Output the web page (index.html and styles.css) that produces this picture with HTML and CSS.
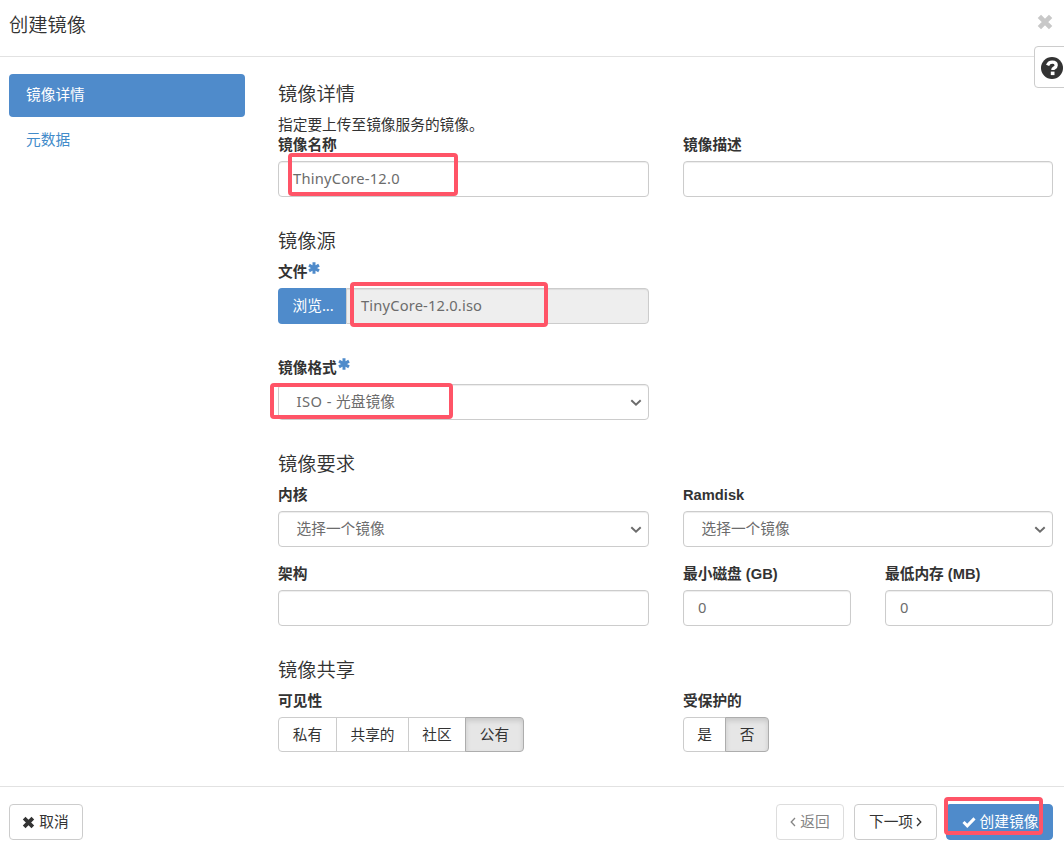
FILE: index.html
```html
<!DOCTYPE html>
<html lang="zh-CN">
<head>
<meta charset="utf-8">
<title>创建镜像</title>
<link rel="stylesheet" href="styles.css">
</head>
<body>
<div class="modal">
  <header class="modal-header">
    <h1 class="modal-title">创建镜像</h1>
    <svg class="close" viewBox="0 0 16 16"><path d="M3 3 13 13M13 3 3 13"/></svg>
  </header>
  <div class="help">
    <svg viewBox="0 0 22 22"><circle cx="11" cy="11" r="11"/><path class="mark" d="M6.6 8.4C7.4 6.2 9 5.2 11.2 5.2c2.6 0 4 1.2 4 3 0 1.4-.8 2.1-2 2.8-1 .6-1.4 1-1.4 2" /><path class="dot" d="M9.8 14.6h3.7v3.5h-3.7z"/></svg>
  </div>
  <main class="modal-body">
    <nav class="steps">
      <a class="step active">镜像详情</a>
      <a class="step">元数据</a>
    </nav>
    <form class="form">
      <section class="section">
        <h2>镜像详情</h2>
        <p class="intro">指定要上传至镜像服务的镜像。</p>
        <div class="row">
          <div class="field"><label>镜像名称</label><div class="input name">ThinyCore-12.0<i class="highlight hl-name"></i></div></div>
          <div class="field"><label>镜像描述</label><div class="input"></div></div>
        </div>
      </section>
      <section class="section">
        <h2>镜像源</h2>
        <div class="row">
          <div class="field"><label>文件<svg class="star" viewBox="0 0 12 12"><path d="M6 .3v11.4M1 3.1l10 5.8M11 3.1 1 8.9"/></svg></label>
            <div class="file"><span class="browse">浏览...</span><div class="input readonly">TinyCore-12.0.iso</div><i class="highlight hl-file"></i></div></div>
        </div>
        <div class="row format-row">
          <div class="field"><label>镜像格式<svg class="star" viewBox="0 0 12 12"><path d="M6 .3v11.4M1 3.1l10 5.8M11 3.1 1 8.9"/></svg></label>
            <div class="input select"><span class="format">ISO - </span>光盘镜像<svg class="chevron" viewBox="0 0 12 8"><path d="m1.3 1.3 4.7 4.4 4.7-4.4"/></svg><i class="highlight hl-format"></i></div></div>
        </div>
      </section>
      <section class="section">
        <h2>镜像要求</h2>
        <div class="row">
          <div class="field"><label>内核</label><div class="input select">选择一个镜像<svg class="chevron" viewBox="0 0 12 8"><path d="m1.3 1.3 4.7 4.4 4.7-4.4"/></svg></div></div>
          <div class="field"><label>Ramdisk</label><div class="input select">选择一个镜像<svg class="chevron" viewBox="0 0 12 8"><path d="m1.3 1.3 4.7 4.4 4.7-4.4"/></svg></div></div>
        </div>
        <div class="row limits-row">
          <div class="field"><label>架构</label><div class="input"></div></div>
          <div class="row">
            <div class="field"><label>最小磁盘 (GB)</label><div class="input">0</div></div>
            <div class="field"><label>最低内存 (MB)</label><div class="input">0</div></div>
          </div>
        </div>
      </section>
      <section class="section">
        <h2>镜像共享</h2>
        <div class="row">
          <div class="field"><label>可见性</label><div class="toggle visibility"><span>私有</span><span>共享的</span><span>社区</span><span class="on">公有</span></div></div>
          <div class="field"><label>受保护的</label><div class="toggle protected"><span>是</span><span class="on">否</span></div></div>
        </div>
      </section>
    </form>
  </main>
  <footer class="modal-footer">
    <div class="btn cancel"><svg class="x" viewBox="0 0 12 12"><path d="m2 2 8 8M10 2 2 10"/></svg>取消</div>
    <div class="btn back"><svg class="angle" viewBox="0 0 6 10"><path d="M5 1 1.2 5 5 9"/></svg>返回</div>
    <div class="btn next">下一项<svg class="angle" viewBox="0 0 6 10"><path d="M1 1l3.8 4L1 9"/></svg></div>
    <div class="btn primary"><svg class="check" viewBox="0 0 14 12"><path d="m1.5 6 3.8 3.8 7.2-7.4"/></svg>创建镜像<i class="highlight hl-create"></i></div>
  </footer>
</div>
</body>
</html>
```
FILE: styles.css
```css
* { box-sizing: border-box; }
body {
  margin: 0;
  background: #fff;
  color: #333;
  font: 14.7px/20px "Noto Sans", "Noto Sans CJK SC", sans-serif;
}
svg { fill: none; stroke: currentColor; }
.modal { position: relative; display: flex; flex-direction: column; height: 848px; overflow: hidden; }
.modal-header {
  display: flex; align-items: flex-start; justify-content: space-between;
  height: 57px; padding: 13px 11px 0 9px; border-bottom: 1px solid #e2e2e2;
}
.modal-title, h2 {
  margin: 0; font-size: 19.3px; line-height: 22px; font-weight: 350;
  font-family: "Noto Sans CJK SC", sans-serif;
}
.close { width: 18px; height: 18px; margin-right: -1px; color: #c8c8c8; stroke-width: 4.2; }
.help {
  position: absolute; left: 1034px; top: 46px; width: 42px; height: 42px;
  padding: 10px 6px; background: #fff; border: 1px solid #ccc; border-radius: 4px;
}
.help svg { display: block; width: 22px; height: 22px; stroke: none; fill: #333; }
.help .mark { fill: none; stroke: #fff; stroke-width: 3.3; }
.help .dot { fill: #fff; }
.modal-body { display: flex; gap: 33px; height: 729px; padding: 17px 11px 0 9px; }
.steps { width: 236px; display: flex; flex-direction: column; gap: 2px; }
.step { height: 43px; padding: 10px 17px; border-radius: 4px; color: #428bca; }
.step.active { background: #4f8bcb; color: #fff; }
.form { flex: 1; padding-top: 8px; }
.section { margin-bottom: 32px; }
.section h2 { margin-bottom: 11px; }
.section .intro { margin: -1px 0 0; }
.row { display: grid; grid-template-columns: 371px 370px; gap: 34px; }
.row .row { grid-template-columns: 168px 168px; }
.format-row { margin-top: 34px; }
.limits-row { margin-top: 17px; }
label {
  display: flex; height: 20px; margin-bottom: 6px; font-weight: 700; white-space: pre;
  font-family: "Liberation Sans", "Noto Sans CJK SC", sans-serif;
}
.intro + .row label { padding-top: 1px; margin-bottom: 7px; }
.star { width: 12px; height: 12px; margin-left: 1px; color: #4f8bcb; stroke-width: 3; }
.input {
  position: relative; height: 36px; padding: 6px 14px; border: 1px solid #ccc;
  border-radius: 4px; color: #6c6c6c; background: #fff;
  box-shadow: inset 0 1px 1px rgba(0,0,0,.075);
}
.name { letter-spacing: .22px; }
.readonly { letter-spacing: .17px; }
.format { letter-spacing: .45px; white-space: pre; }
.select { padding-left: 17.5px; }
.chevron { position: absolute; right: 6px; top: 14px; width: 12px; height: 8px; stroke-width: 2; }
.file { position: relative; display: flex; }
.file .input { flex: 1; border-radius: 0 4px 4px 0; background: #eee; }
.browse { width: 68px; padding: 7px 0 0 14.5px; border-radius: 4px 0 0 4px; background: #4f8bcb; color: #fff; }
.highlight { position: absolute; border: 4px solid #ff5467; border-radius: 4px; }
.hl-name { left: 9px; top: -9px; width: 170px; height: 43px; }
.hl-file { left: 72px; top: -6px; width: 198px; height: 45px; }
.hl-format { left: -9px; top: -2px; width: 183px; height: 36px; }
.hl-create { left: -3px; top: -8px; width: 99px; height: 38px; }
.toggle { display: flex; height: 35px; }
.toggle span { height: 35px; padding: 6px 0; text-align: center; border: 1px solid #ccc; margin-left: -1px; }
.toggle span:first-child { margin-left: 0; border-radius: 4px 0 0 4px; }
.toggle span:last-child { border-radius: 0 4px 4px 0; }
.toggle .on { background: #e6e6e6; border-color: #adadad; box-shadow: inset 0 3px 5px rgba(0,0,0,.125); }
.visibility span:nth-child(1), .visibility span:nth-child(4) { width: 59px; }
.visibility span:nth-child(2) { width: 73px; }
.visibility span:nth-child(3) { width: 58px; }
.protected span:nth-child(1) { width: 43px; }
.protected span:nth-child(2) { width: 44px; }
.modal-footer {
  display: flex; height: 62px; padding: 17px 11px 0 9px; border-top: 1px solid #e2e2e2;
}
.btn {
  position: relative; display: flex; align-items: center; justify-content: center; gap: 4px;
  height: 36px; padding-bottom: 2px; border: 1px solid #ccc; border-radius: 4px; background: #fff; white-space: nowrap;
}
.btn svg { margin-top: 2px; }
.cancel { width: 74px; margin-right: auto; }
.back { width: 68px; margin-right: 10px; color: #858585; border-color: #ddd; }
.next { width: 83px; margin-right: 9px; }
.primary { width: 107px; padding-left: 1px; border-color: #4f8bcb; background: #4f8bcb; color: #fff; }
.x { width: 13px; height: 13px; margin-left: -1px; stroke-width: 3.5; }
.angle { width: 6px; height: 10px; stroke-width: 1.3; }
.next .angle { margin-left: -1px; }
.check { width: 14px; height: 12px; stroke-width: 3; }
```
